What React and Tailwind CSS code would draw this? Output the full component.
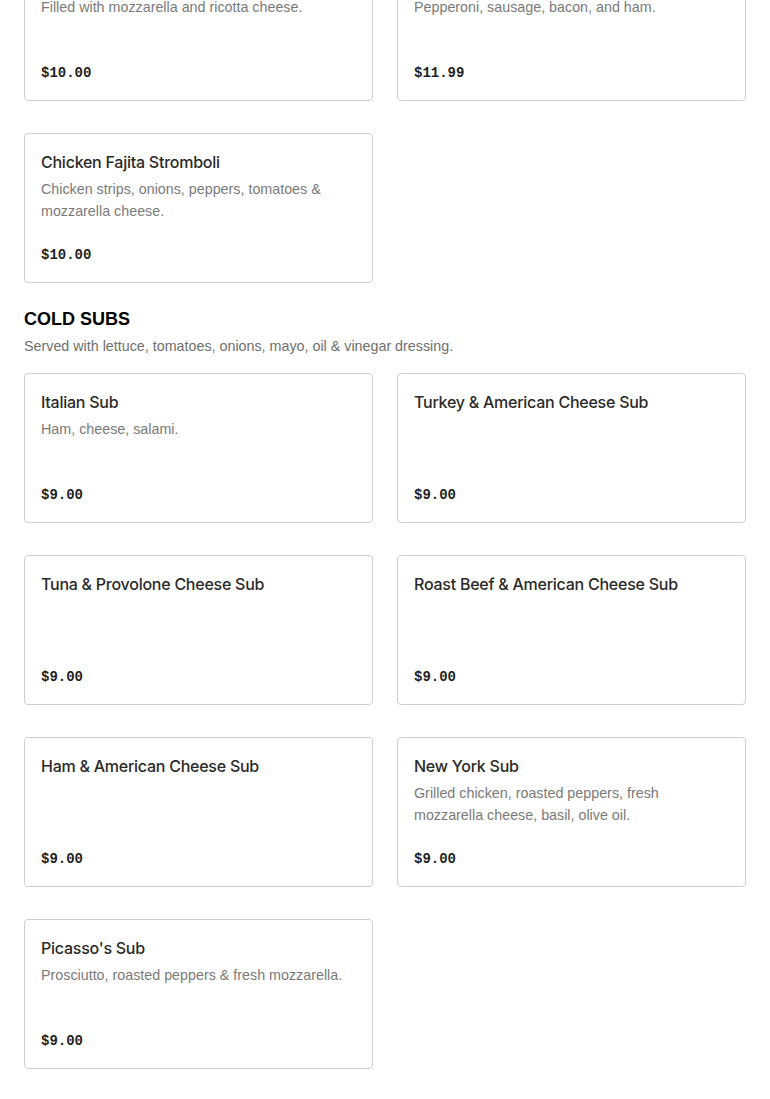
const strombolis = [
  { name: 'Cheese Stromboli', desc: 'Filled with mozzarella and ricotta cheese.', price: '$10.00' },
  { name: 'Meat Lovers Stromboli', desc: 'Pepperoni, sausage, bacon, and ham.', price: '$11.99' },
  { name: 'Chicken Fajita Stromboli', desc: 'Chicken strips, onions, peppers, tomatoes & mozzarella cheese.', price: '$10.00' },
]

const coldSubs = [
  { name: 'Italian Sub', desc: 'Ham, cheese, salami.', price: '$9.00' },
  { name: 'Turkey & American Cheese Sub', desc: '', price: '$9.00' },
  { name: 'Tuna & Provolone Cheese Sub', desc: '', price: '$9.00' },
  { name: 'Roast Beef & American Cheese Sub', desc: '', price: '$9.00' },
  { name: 'Ham & American Cheese Sub', desc: '', price: '$9.00' },
  { name: 'New York Sub', desc: 'Grilled chicken, roasted peppers, fresh mozzarella cheese, basil, olive oil.', price: '$9.00' },
  { name: "Picasso's Sub", desc: 'Prosciutto, roasted peppers & fresh mozzarella.', price: '$9.00' },
]

function ItemCard({ item }) {
  return (
    <div className="flex min-h-[150px] flex-col rounded-[4px] border border-[#cfcfcf] bg-white px-4 pt-4 pb-[15px]">
      <h3 className="font-['Inter',sans-serif] text-[16px] leading-6 font-medium tracking-[-0.25px] text-[#2a2a2a]">
        {item.name}
      </h3>
      {item.desc && (
        <p className="mt-[4px] text-[14.3px] leading-[22px] text-[#7a7a7a]">{item.desc}</p>
      )}
      <p className="mt-auto pt-4 font-['Liberation_Mono',monospace] text-[14px] leading-[23px] font-bold text-[#1f1f1f]">
        {item.price}
      </p>
    </div>
  )
}

export default function App() {
  return (
    <main className="min-h-screen overflow-hidden bg-white px-6 pb-8 font-['Liberation_Sans',Arial,sans-serif]">
      <div className="-mt-[49px] grid grid-cols-2 gap-x-6 gap-y-8">
        {strombolis.map((item) => (
          <ItemCard key={item.name} item={item} />
        ))}
      </div>

      <section className="mt-[24px]">
        <h2 className="text-[18px] leading-6 font-black text-black">COLD SUBS</h2>
        <p className="mt-[4px] text-[14.3px] leading-[22px] text-[#6f6f6f]">
          Served with lettuce, tomatoes, onions, mayo, oil & vinegar dressing.
        </p>
        <div className="mt-[16px] grid grid-cols-2 gap-x-6 gap-y-8">
          {coldSubs.map((item) => (
            <ItemCard key={item.name} item={item} />
          ))}
        </div>
      </section>
    </main>
  )
}
